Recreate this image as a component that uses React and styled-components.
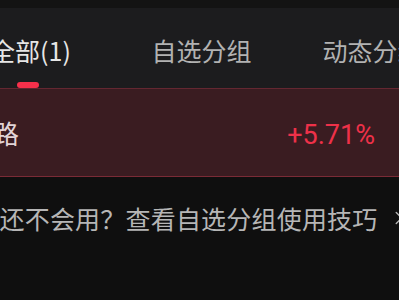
import React from 'react'
import styled, { createGlobalStyle } from 'styled-components'
import { ChevronRight } from 'lucide-react'

const GlobalStyle = createGlobalStyle`
    html, body {
        margin: 0;
        padding: 0;
        background: #0f0f0f;
    }
    body {
        font-family: "Noto Sans CJK SC", "Noto Sans", sans-serif;
    }
    * {
        box-sizing: border-box;
    }
`

const Page = styled.div`
    width: 399px;
    height: 300px;
    overflow: hidden;
    background: #0f0f0f;
`

const StatusStrip = styled.div`
    height: 8px;
    background: #131313;
`

const TabBar = styled.div`
    height: 80px;
    background: #1c1c1e;
    overflow: hidden;
`

const TabTrack = styled.div`
    display: flex;
    margin-left: -55px;
    width: 513px;
    height: 100%;
`

const Tab = styled.div`
    width: 171px;
    flex: none;
    display: flex;
    flex-direction: column;
    align-items: center;
`

const TabLabel = styled.span`
    margin-top: 25px;
    font-size: 25px;
    line-height: 34px;
    white-space: nowrap;
    color: ${p => (p.$active ? '#e6e6e6' : '#b2b2b2')};
`

const Indicator = styled.div`
    margin-top: auto;
    margin-right: 6px;
    width: 22px;
    height: 6px;
    border-radius: 3px;
    background: #f7304b;
`

const StockRow = styled.div`
    height: 89px;
    background: #3a1c21;
    border-top: 1px solid #642731;
    border-bottom: 1px solid #7a2b36;
    overflow: hidden;
`

const StockInner = styled.div`
    display: flex;
    align-items: center;
    justify-content: space-between;
    margin-left: -98px;
    width: 473px;
    height: 100%;
    padding-left: 13px;
`

const StockName = styled.span`
    font-size: 26px;
    color: #e2d4d7;
    white-space: nowrap;
`

const Change = styled.span`
    margin-top: 4px;
    font-family: Roboto, "Noto Sans", sans-serif;
    font-size: 27px;
    color: #ee3149;
`

const TipBar = styled.div`
    margin-top: 24px;
    overflow: hidden;
`

const TipTrack = styled.div`
    display: flex;
    align-items: center;
    justify-content: center;
    margin-left: -52px;
    width: 513px;
    height: 34px;
    font-size: 25px;
    letter-spacing: 0.2px;
    color: #b6b6b6;
    white-space: nowrap;
`

const tabs = ['全部(1)', '自选分组', '动态分组']

export default function App() {
    return (
        <Page>
            <GlobalStyle />
            <StatusStrip />
            <TabBar>
                <TabTrack>
                    {tabs.map((t, idx) => (
                        <Tab key={idx}>
                            <TabLabel $active={idx === 0}>{t}</TabLabel>
                            {idx === 0 && <Indicator />}
                        </Tab>
                    ))}
                </TabTrack>
            </TabBar>
            <StockRow>
                <StockInner>
                    <StockName>大秦铁路</StockName>
                    <Change>+5.71%</Change>
                </StockInner>
            </StockRow>
            <TipBar>
                <TipTrack>
                    还不会用？查看自选分组使用技巧
                    <ChevronRight size={22} strokeWidth={1.5} style={{ marginLeft: 10 }} />
                </TipTrack>
            </TipBar>
        </Page>
    )
}
